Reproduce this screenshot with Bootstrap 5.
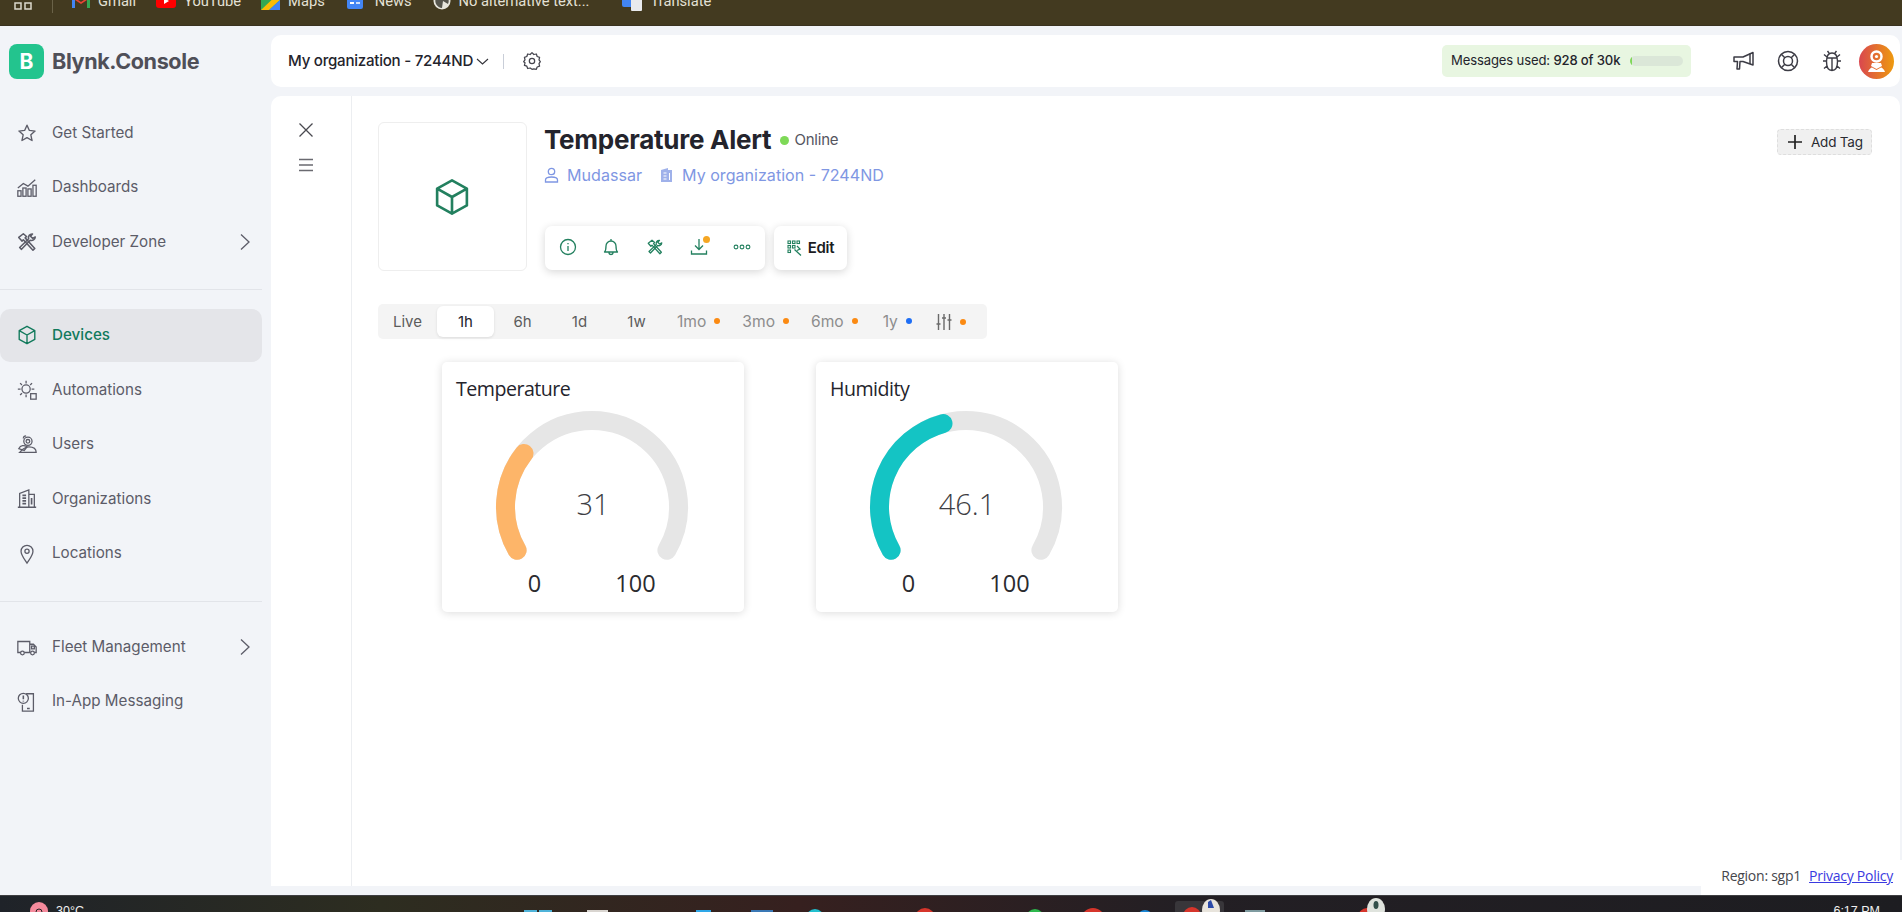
<!DOCTYPE html>
<html lang="en">
<head>
<meta charset="utf-8">
<title>Blynk.Console</title>
<link href="https://cdn.jsdelivr.net/npm/bootstrap@5.3.0/dist/css/bootstrap.min.css" rel="stylesheet">
<style>
html,body{height:100%;overflow:hidden}
body{font-family:Inter,"Liberation Sans",sans-serif;background:#f2f4f8;color:#24242c}
.screen{height:912px;width:1902px;position:relative;overflow:hidden}
.chrome-bar{height:26px;background:#433a20;overflow:hidden;flex:none;border-bottom:1px solid #3a3220}
.chrome-row{margin-top:-12px;height:26px;font-family:Roboto,"Liberation Sans",sans-serif;font-size:14.7px;color:#e4e1d6}
.bm-grid{margin-left:14px;width:18px}
.bm-sep{width:1px;height:26px;background:#6a6248;margin-left:20px;margin-top:-2px}
.bm{display:flex;align-items:center;gap:8px;white-space:nowrap}
.bm1{margin-left:19px}.bm2{margin-left:20px}.bm3{margin-left:20px}.bm4{margin-left:22px}.bm5{margin-left:21px}.bm6{margin-left:33px}
.app-area{height:869px;flex:none}
.side-col{width:271px;flex:none}
.brand{height:80px;padding:18px 0 0 9px;gap:8px}
.brand-b{width:35px;height:35px;border-radius:8px;background:#23c48e;color:#fff;font-weight:700;font-size:21px;line-height:35px;text-align:center}
.brand-t{font-size:21.6px;font-weight:700;color:#4f4f58;letter-spacing:-.4px;line-height:35px}
.side-item{height:54.5px;padding-left:16px;padding-right:10px;gap:14px;color:#5c5c68;font-size:15.2px;width:262px;text-decoration:none}
.side-item svg{flex:none;width:22px;height:22px}
.side-item .chev{width:14px;height:18px;margin-left:auto}
.side-active{background:#e4e5e9;color:#127a5c;font-weight:500;border-radius:10px;height:53px;margin-bottom:1.5px}
.side-rule{height:1px;background:#e2e4e9;width:262px}
.rule-a{margin:19px 0 19px}.rule-b{margin:20px 0 18px}
.main-col{flex:1;padding:9px 2px 9px 0;min-width:0}
.top-head{height:52px;background:#fff;border-radius:10px;padding:0 6px 0 17px;margin-bottom:9px}
.org-name{font-size:15.1px;font-weight:500;color:#24242c;letter-spacing:-.25px}
.org-chev{margin-left:3px}
.org-sep{width:1px;height:15px;background:#c9ced8;margin:0 18px 0 14px}
.msg-box{width:249px;height:32px;background:#e8f6e1;border-radius:5px;padding:0 8px 0 9px;font-size:13.1px;letter-spacing:-.15px;margin-left:auto;white-space:nowrap}
.msg-track{width:53px;height:10px;border-radius:5px;background:#dbe7d8;margin-left:auto;overflow:hidden}
.msg-fill{height:100%;background:#7fd858}
.head-icons{gap:20px;margin-left:41px}
.head-icons svg{width:24px;height:24px}
.head-icons .avatar{width:35px;height:35px;border-radius:50%;background:linear-gradient(90deg,#d9474f,#ee9a0e);margin-left:-5px}
.panel{height:790px;background:#fff;border-radius:10px 10px 0 0}
.rail{width:81px;border-right:1px solid #eceef1;padding:24px 10px 0 0;gap:15px;flex:none}
.rail svg{width:20px;height:20px}
.pane{flex:1;padding:26px 28px 0 26px;min-width:0}
.thing-tile{width:149px;height:149px;border:1px solid #eeeeee;border-radius:6px;flex:none}
.tile-cube{color:#23805f;margin-left:-2px}
.thing-info{margin-left:17px;flex:1}
.thing-title{font-size:26px;font-weight:700;line-height:36px;color:#24242c;letter-spacing:-.25px}
.online-dot{width:9px;height:9px;border-radius:50%;background:#7ed957;margin-left:9px}
.online-txt{font-size:15px;color:#55555e;margin-left:5px;letter-spacing:-.2px}
.owner-row{color:#7f97e3;font-size:16.1px;height:26px;margin-top:4px}
.owner-row svg{width:15px;height:16px}
.owner-gap{margin-left:17px}
.act-row{margin:38px 0 0 1px;gap:9px}
.act-box{height:44px;background:#fff;border-radius:7px;box-shadow:0 2px 8px rgba(0,0,0,.16)}
.act-group{width:220px;padding:0 1px 2px 1px}
.act-icon{width:43.6px;height:24px;position:relative}
.act-icon svg{width:18px;height:18px}
.act-dot{position:absolute;width:7px;height:7px;border-radius:50%;background:#f5a623;right:10px;top:1px}
.act-edit{width:73px;gap:6px;font-weight:600;font-size:15px;letter-spacing:-.3px;color:#1c1c22;justify-content:center}
.act-edit svg{width:15px;height:16px}
.tag-btn{width:95px;height:26px;background:#f0f0f0;border:1px dashed #dedede;border-radius:4px;font-size:13.5px;color:#2a2a30;gap:9px;flex:none;padding-left:10px;letter-spacing:-.2px;margin-top:7px}
.tag-btn svg{width:14px;height:14px}
.range-bar{margin-top:33px;width:609px;height:35px;background:#f4f4f4;border-radius:5px;font-size:15px;color:#5c5c5c;position:relative}
.rng{width:57px;height:31px;line-height:31px;text-align:center;flex:none}
.rng-live{width:59px}
.rng-on{background:#fff;border-radius:6px;color:#24242c;box-shadow:0 1px 3px rgba(0,0,0,.1)}
.rng-mute{color:#8d8d8d;display:flex;align-items:center;gap:8px;flex:none;font-size:15.6px}
.rng-a{margin-left:12px}.rng-c{margin-left:22px}.rng-d{margin-left:25px}.rng-e{margin-left:24px}
.rng-dot{width:6px;height:6px;border-radius:50%;background:#fb8a12;flex:none}
.rng-blue{background:#1e6ef5}
.rng-mute svg{width:16px;height:18px}
.widgets{margin:23px 0 0 64px;gap:72px;font-family:"Open Sans","Liberation Sans",sans-serif}
.gauge-card{width:302px;height:250px;border-radius:5px;background:#fff;box-shadow:0 1px 8px rgba(0,0,0,.14);padding:13px 0 0 14px}
.gauge-title{font-size:19.6px;line-height:28px;height:32px;color:#24242c;letter-spacing:-.5px}
.gauge-svg{display:block;width:200px;height:160px;margin-left:36px}
.gauge-val{font-family:"Open Sans","Liberation Sans",sans-serif;font-size:29px;font-weight:300;fill:#3e3e44}
.gauge-lims{width:200px;margin:2px 0 0 29px;font-size:23.5px;line-height:28px;color:#2b2b2f;gap:41px;justify-content:center}
.gauge-lims span{width:60px;text-align:center}
.foot-note{position:absolute;right:0;bottom:17px;width:201px;height:35px;background:#fff;font-size:14px;color:#46464c;padding-right:9px;font-family:"Open Sans","Liberation Sans",sans-serif;justify-content:flex-end;gap:8px;padding-bottom:9px;letter-spacing:-.25px;white-space:nowrap}
.foot-note a{color:#3a3ae0}
.task-bar{height:17px;flex:none;background:linear-gradient(90deg,#1f2329 0,#2d2d20 20%,#36201f 42%,#231f24 62%,#1d1d21 100%);border-top:1px solid #3f3f42;overflow:hidden;position:relative;color:#f0f0f0;font-size:12.5px;font-family:"Liberation Sans",sans-serif}
.task-art{position:absolute;left:0;top:0;width:1902px;height:17px}
.task-temp{position:absolute;left:56px;top:8px;line-height:14px}
.task-time{position:absolute;right:22px;top:8px;line-height:14px}
</style>
</head>
<body>
<svg width="0" height="0" class="position-absolute">
<defs>
<symbol id="i-cube" viewBox="0 0 24 24"><path d="M12 2.500 20.500 7.200v9.600L12 21.500 3.500 16.800V7.200ZM3.500 7.200 12 12l8.500-4.800M12 12v9.500" fill="none" stroke="currentColor" stroke-width="1.500" stroke-linejoin="round"/></symbol>
<symbol id="i-tools" viewBox="0 0 24 24"><g fill="none" stroke="currentColor" stroke-width="1.700" stroke-linejoin="round"><path d="M3 7 8 3l3.500 3-1.500 1.500L20.500 19 18.500 21 8 9.500 6.500 11Z"/><path d="M21 6.500a4 4 0 0 1-5.500 3.500L6 20l-2-2 9.800-9.500A4 4 0 0 1 18 3.200L15.800 5.700 18 8Z"/></g></symbol>
<symbol id="i-chev" viewBox="0 0 14 18"><path d="M3 1.500 11 9l-8 7.500" fill="none" stroke="currentColor" stroke-width="1.300"/></symbol>
</defs>
</svg>
<div class="screen d-flex flex-column">
  <div class="chrome-bar">
    <div class="chrome-row d-flex align-items-center">
      <svg class="bm-grid" width="18" height="18" viewBox="0 0 18 18"><rect x="1" y="1" width="6" height="6" fill="none" stroke="#dcd9cc" stroke-width="1.500"/><rect x="11" y="1" width="6" height="6" fill="none" stroke="#dcd9cc" stroke-width="1.500"/><rect x="1" y="11" width="6" height="6" fill="none" stroke="#dcd9cc" stroke-width="1.500"/><rect x="11" y="11" width="6" height="6" fill="none" stroke="#dcd9cc" stroke-width="1.500"/></svg>
      <span class="bm-sep"></span>
      <span class="bm bm1"><svg width="18" height="14" viewBox="0 0 18 14"><path d="M0 14V2l9 6 9-6v12h-3V6L9 10 3 6v8Z" fill="#ea4335"/><path d="M0 14h3V6L0 3Z" fill="#4285f4"/><path d="M15 14h3V3l-3 3Z" fill="#34a853"/></svg>Gmail</span>
      <span class="bm bm2"><svg width="20" height="14" viewBox="0 0 20 14"><rect width="20" height="14" rx="3" fill="#f00"/><path d="M8 4l5 3-5 3Z" fill="#fff"/></svg>YouTube</span>
      <span class="bm bm3"><svg width="19" height="18" viewBox="0 0 19 18"><path d="M0 4 10 0 19 0V18H0Z" fill="#34a853"/><path d="M0 18 19 0V8L8 18Z" fill="#fbbc04"/><path d="M8 18 19 8V18Z" fill="#4285f4"/></svg>Maps</span>
      <span class="bm bm4"><svg width="16" height="16" viewBox="0 0 16 16"><rect width="16" height="16" rx="2" fill="#4285f4"/><rect x="3" y="9" width="4" height="2" fill="#fff"/><rect x="9" y="9" width="4" height="2" fill="#cfe0fc"/></svg><span class="ms-1">News</span></span>
      <span class="bm bm5"><svg width="18" height="18" viewBox="0 0 18 18"><circle cx="9" cy="9" r="8.500" fill="#e8e6dd"/><path d="M9 2a7 7 0 0 1 6 10L10 9l-1 7A7 7 0 0 1 3 6l5 2Z" fill="#56554d"/></svg><span>No alternative text...</span></span>
      <span class="bm bm6"><svg width="20" height="20" viewBox="0 0 20 20"><rect width="13" height="16" rx="2" fill="#4285f4"/><rect x="9" y="6" width="11" height="14" rx="1" fill="#e8eaed"/></svg>Translate</span>
    </div>
  </div>
  <div class="app-area d-flex">
    <div class="side-col">
      <div class="brand d-flex"><div class="brand-b">B</div><div class="brand-t">Blynk.Console</div></div>
      <a class="side-item d-flex align-items-center"><svg viewBox="0 0 24 24"><path d="M12 3.500 14.600 9.200 20.800 9.900 16.200 14 17.500 20.200 12 17 6.500 20.200 7.800 14 3.200 9.900 9.400 9.200Z" fill="none" stroke="currentColor" stroke-width="1.500" stroke-linejoin="round"/></svg>Get Started</a>
      <a class="side-item d-flex align-items-center"><svg viewBox="0 0 24 24"><g fill="none" stroke="currentColor" stroke-width="1.400"><rect x="2" y="15" width="3.500" height="6"/><rect x="7.500" y="12" width="3.500" height="9"/><rect x="13" y="13" width="3.500" height="8"/><rect x="18.500" y="9" width="3.500" height="12"/><path d="M2 12 8 7l5 3 8-7"/></g></svg>Dashboards</a>
      <a class="side-item d-flex align-items-center"><svg viewBox="0 0 24 24"><use href="#i-tools"/></svg>Developer Zone<svg class="chev" viewBox="0 0 14 18"><use href="#i-chev"/></svg></a>
      <div class="side-rule rule-a"></div>
      <a class="side-item side-active d-flex align-items-center"><svg viewBox="0 0 24 24"><use href="#i-cube"/></svg>Devices</a>
      <a class="side-item d-flex align-items-center"><svg viewBox="0 0 24 24"><g fill="none" stroke="currentColor" stroke-width="1.400"><circle cx="11" cy="11" r="4.500"/><path d="M11 2v3M11 17v3M2 11h3M17 11h3M4.500 4.500l2 2M15.500 6.500l2-2M4.500 17.500l2-2"/><rect x="16" y="16" width="6" height="6"/></g></svg>Automations</a>
      <a class="side-item d-flex align-items-center"><svg viewBox="0 0 24 24"><g fill="none" stroke="currentColor" stroke-width="1.400"><circle cx="13" cy="8" r="4.500"/><circle cx="13" cy="8" r="2"/><path d="M8 5a3 3 0 0 1 3-3M3 16c2-4 6-4 9-2l-3 4Z"/><path d="M4 20h18c0-4-3-6-8-6-5 0-7 3-10 6Z"/></g></svg>Users</a>
      <a class="side-item d-flex align-items-center"><svg viewBox="0 0 24 24"><g fill="none" stroke="currentColor" stroke-width="1.400"><path d="M4 21V6l10-4v19M14 7h6v14M2 21h20"/><path d="M7 8h4M7 11h4M7 14h4M7 17h4M17 11v7" stroke-width="1.800"/></g></svg>Organizations</a>
      <a class="side-item d-flex align-items-center"><svg viewBox="0 0 24 24"><g fill="none" stroke="currentColor" stroke-width="1.400"><path d="M12 22C8 16 5.500 13 5.500 9a6.500 6.500 0 0 1 13 0c0 4-2.500 7-6.500 13Z"/><circle cx="12" cy="9" r="2.300"/></g></svg>Locations</a>
      <div class="side-rule rule-b"></div>
      <a class="side-item d-flex align-items-center"><svg viewBox="0 0 24 24"><g fill="none" stroke="currentColor" stroke-width="1.400"><path d="M5 18H2V6h13v12H9M15 9h4l3 3v6h-2M15 18h1"/><circle cx="7" cy="18.500" r="2"/><circle cx="18" cy="18.500" r="2"/><rect x="17" y="11" width="3" height="3"/></g></svg>Fleet Management<svg class="chev" viewBox="0 0 14 18"><use href="#i-chev"/></svg></a>
      <a class="side-item d-flex align-items-center"><svg viewBox="0 0 24 24"><g fill="none" stroke="currentColor" stroke-width="1.400"><path d="M11 3h8v19H7v-7"/><circle cx="8" cy="8" r="5.500"/><path d="M8 5v4M8 10.500v1M12 19h3" stroke-width="1.700"/></g></svg>In-App Messaging</a>
    </div>
    <div class="main-col">
      <div class="top-head d-flex align-items-center">
        <span class="org-name">My organization - 7244ND</span>
        <svg class="org-chev" width="13" height="9" viewBox="0 0 13 9"><path d="M1 2l5.500 5L12 2" fill="none" stroke="#33333a" stroke-width="1.100"/></svg>
        <span class="org-sep"></span>
        <svg width="20" height="22" viewBox="0 0 24 24"><g fill="none" stroke="#45454e" stroke-width="1.500" stroke-linejoin="round"><path d="M12 2l2.200 2.200 3-.6 1 3 2.900 1-.7 3L22 12.800l-1.600 2.400.7 3-2.900 1-1 2.800-3-.6L12 22l-2.200-1.600-3 .6-1-2.800-2.900-1 .7-3L2 12.800l1.600-2.200-.7-3 2.900-1 1-3 3 .6Z"/><circle cx="12" cy="12" r="3.200"/></g></svg>
        <div class="msg-box d-flex align-items-center"><span>Messages used: <span class="fw-medium">928 of 30k</span></span><div class="msg-track"><div class="msg-fill" style="width:3.1%"></div></div></div>
        <div class="head-icons d-flex align-items-center">
          <svg viewBox="0 0 24 24"><g fill="none" stroke="#3c3c45" stroke-width="1.500" stroke-linejoin="round"><path d="M2 8h9l10-4.500V16L11 12.500H8l-.5 7.500H5l.5-7.500H2Z"/><path d="M18 4.500V15"/></g></svg>
          <svg viewBox="0 0 24 24"><g fill="none" stroke="#3c3c45" stroke-width="1.500"><circle cx="12" cy="12" r="9.500"/><circle cx="12" cy="12" r="4.500"/><path d="M5.300 5.300 8.800 8.800M18.700 5.300 15.200 8.800M5.300 18.700 8.800 15.200M18.700 18.700 15.200 15.200"/></g></svg>
          <svg viewBox="0 0 24 24"><g fill="none" stroke="#3c3c45" stroke-width="1.400"><path d="M12 4c3.500 0 5.500 3 5.500 8.500S15.500 21.500 12 21.500 6.500 18 6.500 12.500 8.500 4 12 4ZM12 9v12.500M7 9h10M9 4 7.500 2M15 4l1.500-2M6.500 12H3M17.500 12H21M7 17l-3 2.500M17 17l3 2.500M7 8 4 5.500M17 8l3-2.500"/></g></svg>
          <svg class="avatar" viewBox="0 0 35 35"><circle cx="17.500" cy="12.500" r="5" fill="none" stroke="#fff" stroke-width="2.500"/><circle cx="17.500" cy="12.500" r="1.600" fill="#fff"/><path d="M13 19h9l1 3-5.500 3L12 22ZM9 28c1-3 3-4.500 4-4.500l4.500 2.500 4.500-2.500c1 0 3 1.500 4 4.500Z" fill="#fff"/></svg>
        </div>
      </div>
      <div class="panel d-flex">
        <div class="rail d-flex flex-column align-items-center">
          <svg viewBox="0 0 20 20"><path d="M3.500 3.500l13 13M16.500 3.500l-13 13" stroke="#4a4a50" stroke-width="1.300" fill="none"/></svg>
          <svg viewBox="0 0 20 20"><path d="M3 4.500h14M3 10h14M3 15.500h14" stroke="#6a6a70" stroke-width="1.300" fill="none"/></svg>
        </div>
        <div class="pane">
          <div class="d-flex align-items-start">
            <div class="thing-tile d-flex align-items-center justify-content-center"><svg class="tile-cube" width="42" height="42" viewBox="0 0 24 24"><use href="#i-cube"/></svg></div>
            <div class="thing-info">
              <div class="d-flex align-items-center"><span class="thing-title">Temperature Alert</span><span class="online-dot"></span><span class="online-txt">Online</span></div>
              <div class="owner-row d-flex align-items-center">
                <svg class="me-2" viewBox="0 0 15 16"><g fill="none" stroke="currentColor" stroke-width="1.300"><circle cx="7.500" cy="4.500" r="3.200"/><path d="M1.500 15v-2c0-2 2-3 6-3s6 1 6 3v2Z"/></g></svg><span>Mudassar</span>
                <svg class="owner-gap me-2" viewBox="0 0 15 16"><path d="M2 15V3l7-2v2h4v12Z" fill="currentColor" opacity=".75"/><path d="M4.500 6h3M4.500 9h3M4.500 12h3M10.500 6v7" stroke="#fff" stroke-width="1"/></svg><span>My organization - 7244ND</span>
              </div>
              <div class="act-row d-flex">
                <div class="act-box act-group d-flex align-items-center">
                  <span class="act-icon d-flex align-items-center justify-content-center"><svg viewBox="0 0 18 18"><g fill="none" stroke="#23805f" stroke-width="1.300"><circle cx="9" cy="9" r="7.500"/><path d="M9 5v1.300M9 8v5"/></g></svg></span>
                  <span class="act-icon d-flex align-items-center justify-content-center"><svg viewBox="0 0 18 18"><g fill="none" stroke="#23805f" stroke-width="1.300" stroke-linejoin="round"><path d="M2.500 14c1.500-1.500 1.500-3 1.500-6a5 5 0 0 1 10 0c0 3 0 4.500 1.500 6ZM7 14.500a2 2 0 0 0 4 0M9 1v2"/></g></svg></span>
                  <span class="act-icon d-flex align-items-center justify-content-center"><svg viewBox="0 0 24 24" style="color:#23805f"><use href="#i-tools"/></svg></span>
                  <span class="act-icon d-flex align-items-center justify-content-center"><svg viewBox="0 0 18 18"><path d="M9 1v10M5 7.500 9 11.500l4-4M1.500 12.500v3.500h15v-3.500" fill="none" stroke="#23805f" stroke-width="1.300"/></svg><span class="act-dot"></span></span>
                  <span class="act-icon d-flex align-items-center justify-content-center"><svg viewBox="0 0 18 18"><g fill="none" stroke="#23805f" stroke-width="1.100"><circle cx="3" cy="9" r="1.900"/><circle cx="9" cy="9" r="1.900"/><circle cx="15" cy="9" r="1.900"/></g></svg></span>
                </div>
                <div class="act-box act-edit d-flex align-items-center"><svg viewBox="0 0 15 16"><g fill="none" stroke="#23805f" stroke-width="1.100"><rect x="1" y="1" width="2.500" height="2.500"/><rect x="5.500" y="1" width="2.500" height="2.500"/><rect x="10" y="1" width="2.500" height="2.500"/><rect x="1" y="5.500" width="2.500" height="2.500"/><rect x="5.500" y="5.500" width="2.500" height="2.500"/><rect x="1" y="10" width="2.500" height="2.500"/><path d="M7.500 9.500 14 15.500M10 6l3 3-3 1.500" stroke-width="1.300"/></g></svg>Edit</div>
              </div>
            </div>
            <div class="tag-btn d-flex align-items-center"><svg viewBox="0 0 14 14"><path d="M7 0v14M0 7h14" stroke="#222" stroke-width="1.700"/></svg>Add Tag</div>
          </div>
          <div class="range-bar d-flex align-items-center">
            <span class="rng rng-live">Live</span>
            <span class="rng rng-on">1h</span>
            <span class="rng">6h</span>
            <span class="rng">1d</span>
            <span class="rng">1w</span>
            <span class="rng-mute rng-a">1mo<span class="rng-dot"></span></span>
            <span class="rng-mute rng-c">3mo<span class="rng-dot"></span></span>
            <span class="rng-mute rng-c">6mo<span class="rng-dot"></span></span>
            <span class="rng-mute rng-d">1y<span class="rng-dot rng-blue"></span></span>
            <span class="rng-mute rng-e"><svg viewBox="0 0 16 18"><path d="M2.500 1v16M8 1v16M13.500 1v16M.5 11h4M6 5h4M11.500 7h4" stroke="#6a6a6a" stroke-width="1.400" fill="none"/></svg><span class="rng-dot"></span></span>
          </div>
          <div class="widgets d-flex">
            <div class="gauge-card">
              <div class="gauge-title">Temperature</div>
              <svg class="gauge-svg" viewBox="0 0 200 160"><path d="M25.100 143.250A86.500 86.500 0 1 1 174.900 143.250" fill="none" stroke="#e6e6e6" stroke-width="19" stroke-linecap="round"/><path d="M25.100 143.250A86.500 86.500 0 0 1 32 46.500" fill="none" stroke="#fdb569" stroke-width="19" stroke-linecap="round"/><text class="gauge-val" x="101" y="108" text-anchor="middle">31</text></svg>
              <div class="gauge-lims d-flex"><span>0</span><span>100</span></div>
            </div>
            <div class="gauge-card">
              <div class="gauge-title">Humidity</div>
              <svg class="gauge-svg" viewBox="0 0 200 160"><path d="M25.100 143.250A86.500 86.500 0 1 1 174.900 143.250" fill="none" stroke="#e6e6e6" stroke-width="19" stroke-linecap="round"/><path d="M25.100 143.250A86.500 86.500 0 0 1 77 16.600" fill="none" stroke="#14c4c4" stroke-width="19" stroke-linecap="round"/><text class="gauge-val" x="101" y="108" text-anchor="middle">46.1</text></svg>
              <div class="gauge-lims d-flex"><span>0</span><span>100</span></div>
            </div>
          </div>
        </div>
      </div>
    </div>
  </div>
  <div class="foot-note d-flex align-items-end"><span>Region: sgp1</span><a href="#">Privacy Policy</a></div>
  <div class="task-bar">
    <svg class="task-art" viewBox="0 0 1902 17"><circle cx="39" cy="15" r="9" fill="#f58a9c"/><circle cx="39" cy="16" r="3" fill="none" stroke="#222"/><rect x="524" y="14" width="13" height="4" fill="#4fb3d9"/><rect x="539" y="14" width="13" height="4" fill="#4fb3d9"/><rect x="587" y="14" width="21" height="4" fill="#d9d5d0"/><rect x="696" y="14" width="15" height="4" fill="#2ea7e8"/><rect x="751" y="14" width="22" height="4" fill="#3a78b5"/><circle cx="815" cy="22" r="9" fill="#22c0cf"/><circle cx="925" cy="22" r="10" fill="#d6352b"/><circle cx="1035" cy="22" r="9" fill="#2db84d"/><circle cx="1093" cy="24" r="12" fill="#d6352b"/><circle cx="1145" cy="22" r="8" fill="#1b87d6"/><rect x="1175" y="5" width="49" height="14" rx="3" fill="#38363a"/><circle cx="1192" cy="20" r="9" fill="#d6352b"/><ellipse cx="1211" cy="14" rx="9" ry="11" fill="#e8e4dc"/><path d="M1208 6l3-2 3 8h-6Z" fill="#2b4aa8"/><rect x="1245" y="14" width="20" height="4" fill="#7f9ba0"/><circle cx="1367" cy="21" r="9" fill="#d6352b"/><ellipse cx="1376" cy="13" rx="9" ry="11" fill="#dfe3dd"/><ellipse cx="1376" cy="9" rx="2.500" ry="4" fill="#33504a"/></svg>
    <span class="task-temp">30°C</span>
    <span class="task-time">6:17 PM</span>
  </div>
</div>
<script src="https://cdn.jsdelivr.net/npm/bootstrap@5.3.0/dist/js/bootstrap.bundle.min.js"></script>
</body>
</html>
